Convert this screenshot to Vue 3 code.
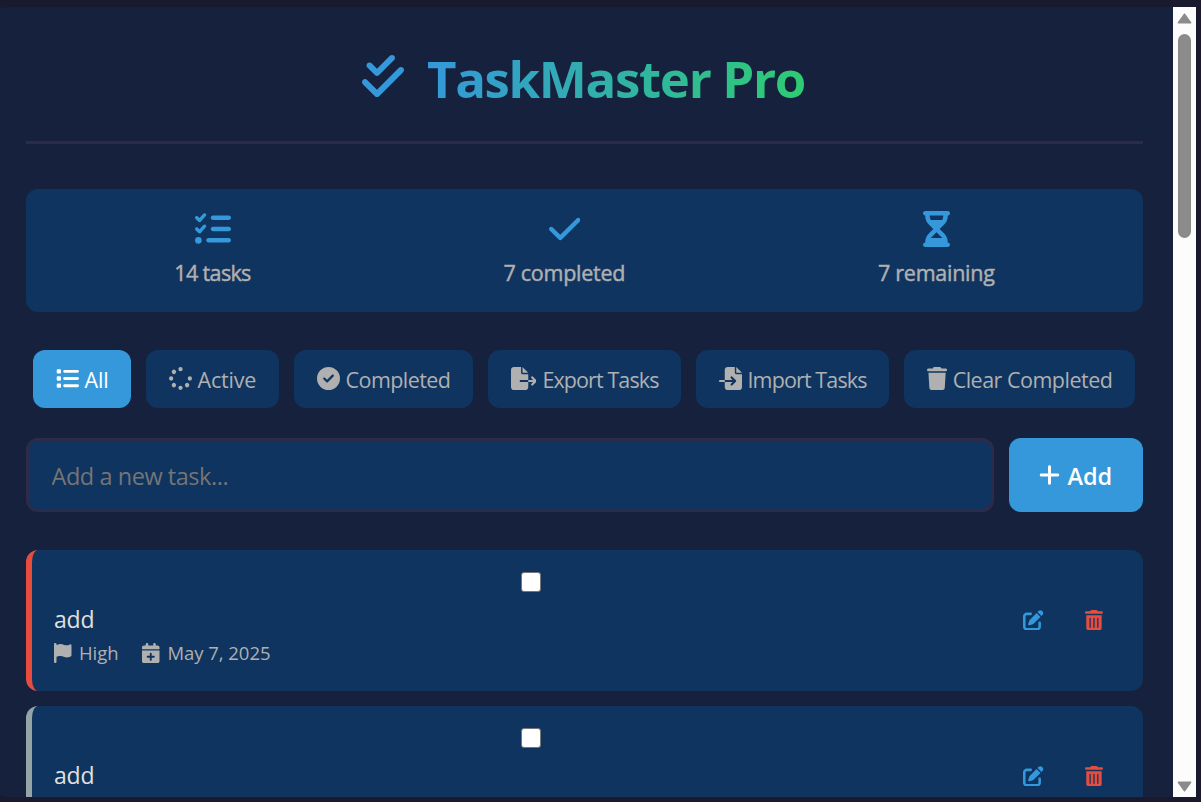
<script setup>
const icons = {
  double: [448, 'M342.6 86.6c12.5-12.5 12.5-32.8 0-45.3s-32.8-12.5-45.3 0L160 178.7l-57.4-57.4c-12.5-12.5-32.8-12.5-45.3 0s-12.5 32.8 0 45.3l80 80c12.5 12.5 32.8 12.5 45.3 0l160-160zm96 128c12.5-12.5 12.5-32.8 0-45.3s-32.8-12.5-45.3 0L160 402.7 54.6 297.4c-12.5-12.5-32.8-12.5-45.3 0s-12.5 32.8 0 45.3l128 128c12.5 12.5 32.8 12.5 45.3 0l256-256z'],
  check: [448, 'M438.6 105.4c12.5 12.5 12.5 32.8 0 45.3l-256 256c-12.5 12.5-32.8 12.5-45.3 0l-128-128c-12.5-12.5-12.5-32.8 0-45.3s32.8-12.5 45.3 0L160 338.7 393.4 105.4c12.5-12.5 32.8-12.5 45.3 0z'],
  tasks: [512, 'M152.1 38.2c9.9 8.9 10.7 24 1.8 33.9l-72 80c-4.4 4.9-10.6 7.8-17.2 7.9s-12.9-2.4-17.6-7L7 113C-2.3 103.6-2.3 88.4 7 79s24.6-9.4 33.9 0l22.1 22.1 55.1-61.2c8.9-9.9 24-10.7 33.9-1.8zm0 160c9.9 8.9 10.7 24 1.8 33.9l-72 80c-4.4 4.9-10.6 7.8-17.2 7.9s-12.9-2.4-17.6-7L7 273c-9.4-9.4-9.4-24.6 0-33.9s24.6-9.4 33.9 0l22.1 22.1 55.1-61.2c8.9-9.9 24-10.7 33.9-1.8zM224 96c0-17.7 14.3-32 32-32H480c17.7 0 32 14.3 32 32s-14.3 32-32 32H256c-17.7 0-32-14.3-32-32zm0 160c0-17.7 14.3-32 32-32H480c17.7 0 32 14.3 32 32s-14.3 32-32 32H256c-17.7 0-32-14.3-32-32zM160 416c0-17.7 14.3-32 32-32H480c17.7 0 32 14.3 32 32s-14.3 32-32 32H192c-17.7 0-32-14.3-32-32zM48 368a48 48 0 1 1 0 96 48 48 0 1 1 0-96z'],
  hourglass: [384, 'M32 0C14.3 0 0 14.3 0 32S14.3 64 32 64V75c0 42.4 16.9 83.1 46.9 113.1L146.7 256 78.9 323.9C48.9 353.9 32 394.6 32 437v11c-17.7 0-32 14.3-32 32s14.3 32 32 32H64 320h32c17.7 0 32-14.3 32-32s-14.3-32-32-32V437c0-42.4-16.9-83.1-46.9-113.1L237.3 256l67.9-67.9c30-30 46.9-70.7 46.9-113.1V64c17.7 0 32-14.3 32-32s-14.3-32-32-32H320 64 32zM96 75V64H288V75c0 19-5.6 37.4-16 53H112c-10.3-15.6-16-34-16-53zm16 309c3.5-5.3 7.6-10.3 12.1-14.9L192 301.3l67.9 67.9c4.6 4.6 8.6 9.6 12.1 14.9H112z'],
  list: [512, 'M40 48C26.7 48 16 58.7 16 72v48c0 13.3 10.7 24 24 24H88c13.3 0 24-10.7 24-24V72c0-13.3-10.7-24-24-24H40zM192 64c-17.7 0-32 14.3-32 32s14.3 32 32 32H480c17.7 0 32-14.3 32-32s-14.3-32-32-32H192zm0 160c-17.7 0-32 14.3-32 32s14.3 32 32 32H480c17.7 0 32-14.3 32-32s-14.3-32-32-32H192zm0 160c-17.7 0-32 14.3-32 32s14.3 32 32 32H480c17.7 0 32-14.3 32-32s-14.3-32-32-32H192zM16 232v48c0 13.3 10.7 24 24 24H88c13.3 0 24-10.7 24-24V232c0-13.3-10.7-24-24-24H40c-13.3 0-24 10.7-24 24zM40 368c-13.3 0-24 10.7-24 24v48c0 13.3 10.7 24 24 24H88c13.3 0 24-10.7 24-24V392c0-13.3-10.7-24-24-24H40z'],
  spinner: [512, 'M304 48a48 48 0 1 0 -96 0 48 48 0 1 0 96 0zm0 416a48 48 0 1 0 -96 0 48 48 0 1 0 96 0zM48 304a48 48 0 1 0 0-96 48 48 0 1 0 0 96zm464-48a48 48 0 1 0 -96 0 48 48 0 1 0 96 0zM142.9 437A48 48 0 1 0 75 369.1 48 48 0 1 0 142.9 437zm0-294.2A48 48 0 1 0 75 75a48 48 0 1 0 67.9 67.9zM369.1 437A48 48 0 1 0 437 369.1 48 48 0 1 0 369.1 437z'],
  circle: [512, 'M256 512A256 256 0 1 0 256 0a256 256 0 1 0 0 512zM369 209L241 337c-9.4 9.4-24.6 9.4-33.9 0l-64-64c-9.4-9.4-9.4-24.6 0-33.9s24.6-9.4 33.9 0l47 47L335 175c9.4-9.4 24.6-9.4 33.9 0s9.4 24.6 0 33.9z'],
  export: [576, 'M0 64C0 28.7 28.7 0 64 0H224V128c0 17.7 14.3 32 32 32H384V288H216c-13.3 0-24 10.7-24 24s10.7 24 24 24H384V448c0 35.3-28.7 64-64 64H64c-35.3 0-64-28.7-64-64V64zM384 336V288H494.1l-39-39c-9.4-9.4-9.4-24.6 0-33.9s24.6-9.4 33.9 0l80 80c9.4 9.4 9.4 24.6 0 33.9l-80 80c-9.4 9.4-24.6 9.4-33.9 0s-9.4-24.6 0-33.9l39-39H384zm0-208H256V0L384 128z'],
  import: [512, 'M128 64c0-35.3 28.7-64 64-64H352V128c0 17.7 14.3 32 32 32H512V448c0 35.3-28.7 64-64 64H192c-35.3 0-64-28.7-64-64V336H302.1l-39 39c-9.4 9.4-9.4 24.6 0 33.9s24.6 9.4 33.9 0l80-80c9.4-9.4 9.4-24.6 0-33.9l-80-80c-9.4-9.4-24.6-9.4-33.9 0s-9.4 24.6 0 33.9l39 39H128V64zm0 224v48H24c-13.3 0-24-10.7-24-24s10.7-24 24-24H128zM512 128H384V0L512 128z'],
  trash: [448, 'M135.2 17.7L128 32H32C14.3 32 0 46.3 0 64S14.3 96 32 96H416c17.7 0 32-14.3 32-32s-14.3-32-32-32H320l-7.2-14.3C307.4 6.8 296.3 0 284.2 0H163.8c-12.1 0-23.2 6.8-28.6 17.7zM416 128H32L53.2 467c1.6 25.3 22.6 45 47.9 45H346.9c25.3 0 46.3-19.7 47.9-45L416 128z'],
  bin: [448, 'M135.2 17.7C140.6 6.8 151.7 0 163.8 0H284.2c12.1 0 23.2 6.8 28.6 17.7L320 32h96c17.7 0 32 14.3 32 32s-14.3 32-32 32H32C14.3 96 0 81.7 0 64S14.3 32 32 32h96l7.2-14.3zM32 128H416V448c0 35.3-28.7 64-64 64H96c-35.3 0-64-28.7-64-64V128zm96 64c-8.8 0-16 7.2-16 16V432c0 8.8 7.2 16 16 16s16-7.2 16-16V208c0-8.8-7.2-16-16-16zm96 0c-8.8 0-16 7.2-16 16V432c0 8.8 7.2 16 16 16s16-7.2 16-16V208c0-8.8-7.2-16-16-16zm96 0c-8.8 0-16 7.2-16 16V432c0 8.8 7.2 16 16 16s16-7.2 16-16V208c0-8.8-7.2-16-16-16z'],
  plus: [448, 'M256 80c0-17.7-14.3-32-32-32s-32 14.3-32 32V224H48c-17.7 0-32 14.3-32 32s14.3 32 32 32H192V432c0 17.7 14.3 32 32 32s32-14.3 32-32V288H400c17.7 0 32-14.3 32-32s-14.3-32-32-32H256V80z'],
  flag: [448, 'M64 32C64 14.3 49.7 0 32 0S0 14.3 0 32V64 368 480c0 17.7 14.3 32 32 32s32-14.3 32-32V352l64.3-16.1c41.1-10.3 84.6-5.5 122.5 13.4c44.2 22.1 95.5 24.8 141.7 7.4l34.7-13c12.5-4.7 20.8-16.6 20.8-30V66.1c0-23-24.2-38-44.8-27.7l-9.6 4.8c-46.3 23.2-100.8 23.2-147.1 0c-35.1-17.6-75.4-22-113.5-12.5L64 48V32z'],
  calendar: [448, 'M96 32V64H48C21.5 64 0 85.5 0 112v48H448V112c0-26.5-21.5-48-48-48H352V32c0-17.7-14.3-32-32-32s-32 14.3-32 32V64H160V32c0-17.7-14.3-32-32-32S96 14.3 96 32zM448 192H0V464c0 26.5 21.5 48 48 48H400c26.5 0 48-21.5 48-48V192zM224 248c13.3 0 24 10.7 24 24v56h56c13.3 0 24 10.7 24 24s-10.7 24-24 24H248v56c0 13.3-10.7 24-24 24s-24-10.7-24-24V376H144c-13.3 0-24-10.7-24-24s10.7-24 24-24h56V272c0-13.3 10.7-24 24-24z'],
  edit: [512, 'M471.6 21.7c-21.9-21.9-57.3-21.9-79.2 0L362.3 51.7l97.9 97.9 30.1-30.1c21.9-21.9 21.9-57.3 0-79.2L471.6 21.7zm-299.2 220c-6.1 6.1-10.8 13.6-13.5 21.9l-29.6 88.8c-2.9 8.6-.6 18.1 5.8 24.6s15.9 8.7 24.6 5.8l88.8-29.6c8.2-2.7 15.7-7.4 21.9-13.5L437.7 172.3 339.7 74.3 172.4 241.7zM96 64C43 64 0 107 0 160V416c0 53 43 96 96 96H352c53 0 96-43 96-96V320c0-17.7-14.3-32-32-32s-32 14.3-32 32v96c0 17.7-14.3 32-32 32H96c-17.7 0-32-14.3-32-32V160c0-17.7 14.3-32 32-32h96c17.7 0 32-14.3 32-32s-14.3-32-32-32H96z'],
}

const Icon = (props) => {
  const [w, d] = icons[props.name]
  return h('svg', { class: 'icon', viewBox: `0 0 ${w} 512` }, [h('path', { d, fill: 'currentColor' })])
}
Icon.props = ['name']

const stats = [
  { icon: 'tasks', text: '14 tasks', key: 'total' },
  { icon: 'check', text: '7 completed', key: 'done' },
  { icon: 'hourglass', text: '7 remaining', key: 'left' },
]

const filters = [
  { icon: 'list', text: 'All', key: 'all' },
  { icon: 'spinner', text: 'Active', key: 'active' },
  { icon: 'circle', text: 'Completed', key: 'completed' },
  { icon: 'export', text: 'Export Tasks', key: 'export' },
  { icon: 'import', text: 'Import Tasks', key: 'import' },
  { icon: 'trash', text: 'Clear Completed', key: 'clear' },
]

const tasks = [
  { title: 'add', priority: 'High', level: 'high', date: 'May 7, 2025' },
  { title: 'add', level: 'none' },
]
</script>

<script>
import { h } from 'vue'
</script>

<template>
  <div class="page">
    <div class="panel">
      <main class="content">
        <header class="header">
          <Icon name="double" />
          <h1>TaskMaster Pro</h1>
        </header>

        <section class="stats">
          <div v-for="s in stats" :key="s.key" class="stat" :class="s.key">
            <Icon :name="s.icon" />
            <span>{{ s.text }}</span>
          </div>
        </section>

        <nav class="filters">
          <button v-for="f in filters" :key="f.key" class="filter" :class="f.key">
            <Icon :name="f.icon" />
            <span>{{ f.text }}</span>
          </button>
        </nav>

        <form class="new-task" @submit.prevent>
          <input class="entry" type="text" placeholder="Add a new task..." />
          <button class="add"><Icon name="plus" /><span>Add</span></button>
        </form>

        <article v-for="(t, i) in tasks" :key="i" class="task" :class="t.level">
          <div class="info">
            <span class="box"></span>
            <div class="title">{{ t.title }}</div>
            <div v-if="t.priority" class="meta">
              <Icon name="flag" /><span class="priority">{{ t.priority }}</span>
              <Icon name="calendar" /><span>{{ t.date }}</span>
            </div>
          </div>
          <div class="actions">
            <Icon name="edit" />
            <Icon name="bin" />
          </div>
        </article>
      </main>

      <div class="scrollbar">
        <svg class="arrow" viewBox="0 0 15 11"><path d="M7.5 1.2 L13.6 9.8 H1.4Z" /></svg>
        <div class="thumb"></div>
        <svg class="arrow down" viewBox="0 0 15 11"><path d="M7.5 1.2 L13.6 9.8 H1.4Z" /></svg>
      </div>
    </div>
  </div>
</template>

<style>
html,
body {
  margin: 0;
  overflow: hidden;
  background: #1a1a2e;
}
.icon {
  display: block;
  flex: none;
}
</style>

<style scoped>
.page {
  box-sizing: border-box;
  width: 1201px;
  height: 802px;
  padding: 7px 5px 5px 0;
  overflow: hidden;
  background: #1a1a2e;
  font-family: "Open Sans", "Noto Sans", sans-serif;
  color: #e0e0e0;
}
.panel {
  display: flex;
  height: 790px;
  margin-left: -5px;
  border-radius: 12px 0 0 12px;
  background: #16213e;
  overflow: hidden;
}
.content {
  width: 1117px;
  padding: 0 30px 0 31px;
}
.header {
  display: flex;
  justify-content: center;
  box-sizing: border-box;
  height: 137px;
  padding: 45px 2px 0 0;
  border-bottom: 3px solid #2c2b4a;
}
.header .icon {
  width: 42px;
  height: 48px;
  margin-right: 23px;
  color: #3498db;
}
h1 {
  height: 70px;
  margin: -9px 0 0;
  font-size: 51px;
  line-height: 70px;
  font-weight: 700;
  letter-spacing: -1.35px;
  white-space: nowrap;
  background: linear-gradient(90deg, #3498db, #2ecc71);
  -webkit-background-clip: text;
  background-clip: text;
  color: transparent;
}
.stats {
  display: flex;
  justify-content: space-around;
  box-sizing: border-box;
  height: 123px;
  margin-top: 45px;
  padding: 21px 22px 0;
  border-radius: 12px;
  background: #0f3460;
}
.stat {
  display: flex;
  flex-direction: column;
  align-items: center;
  color: #b0b0b0;
  font-size: 21.5px;
  line-height: 30px;
  white-space: nowrap;
  -webkit-text-stroke: 0.45px #b0b0b0;
}
.stat .icon {
  height: 36px;
  margin: 0.5px 0 11.5px;
  color: #3498db;
}
.stat.total { letter-spacing: -0.65px; }
.stat.done { letter-spacing: -0.25px; }
.stat.left { letter-spacing: -0.25px; }
.filters {
  display: flex;
  gap: 15px;
  margin: 38px 0 0 7px;
}
.filter {
  display: flex;
  box-sizing: border-box;
  height: 58px;
  padding: 16px 0 0 22.5px;
  border: 0;
  border-radius: 12px;
  background: #0f3460;
  color: #b0b0b0;
  font: 400 21.5px/28px "Open Sans", "Noto Sans", sans-serif;
  letter-spacing: -0.5px;
  white-space: nowrap;
}
.filter .icon {
  height: 23px;
  margin: 0.5px 6px 0 0;
}
.filter.all { width: 98px; background: #3498db; color: #fff; letter-spacing: -0.1px; }
.filter.active { width: 133px; letter-spacing: -0.2px; }
.filter.completed { width: 179px; letter-spacing: -0.55px; }
.filter.export { width: 193px; letter-spacing: -0.9px; }
.filter.import { width: 193px; letter-spacing: -0.88px; }
.filter.clear { width: 231px; }
.new-task {
  display: flex;
  gap: 15px;
  height: 74px;
  margin-top: 30px;
}
.entry {
  box-sizing: border-box;
  width: 968px;
  height: 74px;
  padding: 1px 22.5px 0;
  border: 3px solid #2c2b4a;
  border-radius: 12px;
  outline: 0;
  background: #0f3460;
  color: #e0e0e0;
  font: 400 23.5px "Open Sans", "Noto Sans", sans-serif;
  letter-spacing: -0.45px;
}
.entry::placeholder {
  color: #757575;
  opacity: 1;
}
.add {
  display: flex;
  box-sizing: border-box;
  width: 134px;
  height: 74px;
  padding: 25px 0 0 30px;
  border: 0;
  border-radius: 12px;
  background: #3498db;
  color: #fff;
  font: 600 23.5px/28px "Open Sans", "Noto Sans", sans-serif;
  letter-spacing: -0.1px;
}
.add span { margin-top: -1px; }
.add .icon {
  height: 24px;
  margin-right: 7.5px;
}
.task {
  display: flex;
  justify-content: space-between;
  box-sizing: border-box;
  height: 141px;
  margin-top: 38px;
  padding: 22px 40.5px 0 22px;
  border-left: 6px solid #95a5a6;
  border-radius: 12px;
  background: #0f3460;
}
.task.high { border-left-color: #e74c3c; }
.task + .task { margin-top: 15px; }
.info { width: 954px; }
.box {
  display: block;
  box-sizing: border-box;
  width: 20px;
  height: 20px;
  margin: 0 auto;
  border: 1.5px solid #767676;
  border-radius: 3px;
  background: #fff;
}
.title {
  margin-top: 10px;
  font-size: 23px;
  line-height: 34px;
  letter-spacing: -0.2px;
}
.meta {
  display: flex;
  margin-top: 4px;
  color: #b0b0b0;
  font-size: 18.5px;
  line-height: 26px;
  letter-spacing: -0.05px;
}
.meta .icon {
  height: 20px;
  margin: 2.5px 8px 0 0;
}
.meta .icon:first-child { margin-right: 7.5px; }
.priority { margin-right: 23.5px; }
.actions {
  display: flex;
  gap: 41px;
  padding-top: 37.5px;
  color: #3498db;
}
.actions .icon { height: 20.5px; }
.actions .icon + .icon { color: #e74c3c; }
.scrollbar {
  display: flex;
  flex-direction: column;
  align-items: center;
  box-sizing: border-box;
  width: 23px;
  height: 790px;
  padding: 6px 0 5px;
  background: #fcfcfc;
}
.arrow {
  width: 15px;
  height: 11px;
  fill: #8b8b8b;
  stroke: #8b8b8b;
  stroke-width: 1.5;
  stroke-linejoin: round;
}
.thumb {
  width: 13px;
  height: 204px;
  margin-top: 10px;
  border-radius: 7px;
  background: #8b8b8b;
}
.down {
  margin-top: auto;
  transform: rotate(180deg);
}
</style>
